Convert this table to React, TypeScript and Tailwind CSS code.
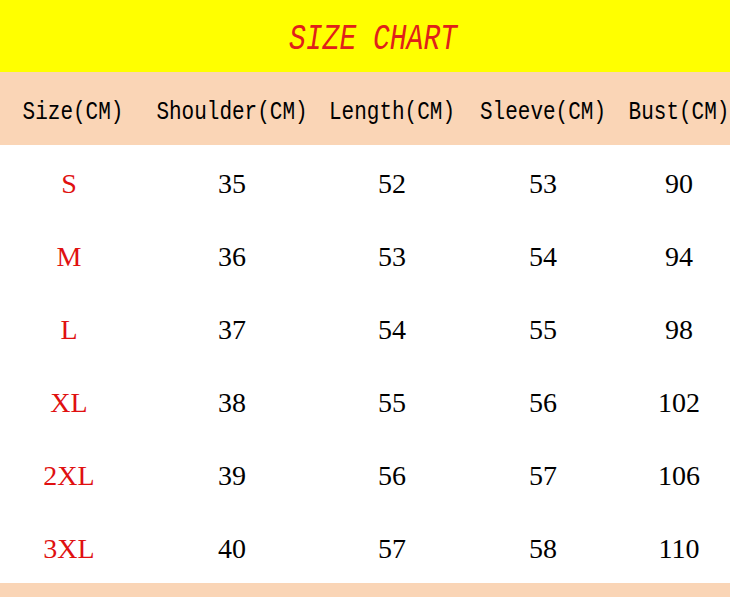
const headers = ['Size(CM)', 'Shoulder(CM)', 'Length(CM)', 'Sleeve(CM)', 'Bust(CM)']

const rows = [
  ['S', '35', '52', '53', '90'],
  ['M', '36', '53', '54', '94'],
  ['L', '37', '54', '55', '98'],
  ['XL', '38', '55', '56', '102'],
  ['2XL', '39', '56', '57', '106'],
  ['3XL', '40', '57', '58', '110'],
]

const cols = 'grid grid-cols-[138px_188px_132px_170px_102px]'

export default function App() {
  return (
    <div className="w-[730px] h-[597px] overflow-hidden bg-white">
      {/* Title */}
      <div className="h-[72px] bg-[#ffff00] flex items-center justify-center">
        <h1 className="pl-[16px] pt-[6px] text-[28px] italic text-[#e0201a] font-['Liberation_Mono',monospace] scale-y-[1.3] whitespace-pre">
          SIZE CHART
        </h1>
      </div>

      {/* Header row */}
      <div className={`${cols} h-[73px] bg-[#fad5b6] items-center pt-[9px]`}>
        {headers.map((h, i) => (
          <div
            key={h}
            className={`text-center text-[21px] text-black font-['Liberation_Mono',monospace] scale-y-[1.25] whitespace-nowrap ${
              i === 0 ? 'pl-[8px]' : ''
            }`}
          >
            {h}
          </div>
        ))}
      </div>

      {/* Data rows */}
      {rows.map((r) => (
        <div key={r[0]} className={`${cols} h-[73px] items-center pt-[4px]`}>
          {r.map((v, i) => (
            <div
              key={i}
              className={`text-center text-[28px] font-['Liberation_Serif',serif] ${
                i === 0 ? 'text-[#e01010]' : 'text-black'
              }`}
            >
              {v}
            </div>
          ))}
        </div>
      ))}

      <div className="h-[14px] bg-[#fad5b6]" />
    </div>
  )
}
